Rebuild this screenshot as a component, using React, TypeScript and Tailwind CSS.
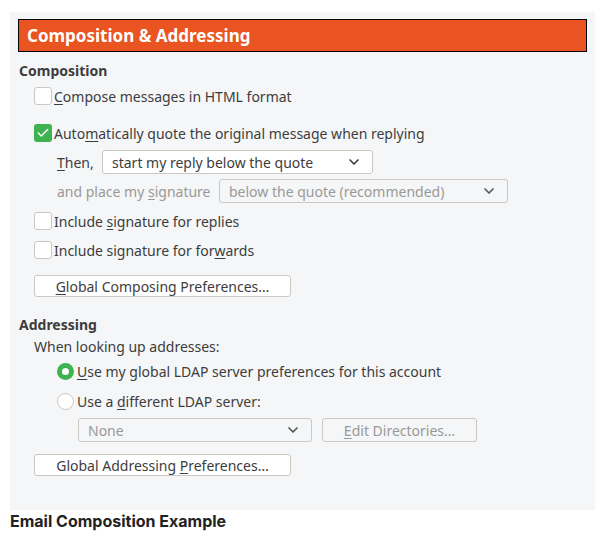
import React from 'react';
import { ChevronDown, Check } from 'lucide-react';

const font = { fontFamily: '"Noto Sans", "Open Sans", sans-serif' };

const U = ({ children }: { children: React.ReactNode }) => <span className="underline underline-offset-2">{children}</span>;

const CheckBox = ({ checked }: { checked?: boolean }) =>
  checked ? (
    <span className="flex h-[18px] w-[18px] shrink-0 items-center justify-center rounded-[3px] bg-[#3eb34f]">
      <Check className="h-3.5 w-3.5 text-white" strokeWidth={2.5} />
    </span>
  ) : (
    <span className="h-[18px] w-[18px] shrink-0 rounded-[3px] border border-[#cdc7c2] bg-white" />
  );

const Radio = ({ checked }: { checked?: boolean }) =>
  checked ? (
    <span className="flex h-[17px] w-[17px] shrink-0 items-center justify-center rounded-full bg-[#3eb34f]">
      <span className="h-[7px] w-[7px] rounded-full bg-white" />
    </span>
  ) : (
    <span className="h-[17px] w-[17px] shrink-0 rounded-full border border-[#cdc7c2] bg-white" />
  );

const Select = ({ value, className = '', disabled }: { value: string; className?: string; disabled?: boolean }) => (
  <div
    className={`flex h-[24px] items-center justify-between rounded-[3px] border border-[#cdc7c2] pl-[9px] pr-[10px] ${
      disabled ? 'bg-[#f5f6f7] text-[#9a9996]' : 'bg-white text-[#3d3d3d]'
    } ${className}`}
  >
    <span>{value}</span>
    <ChevronDown className={`h-4 w-4 ${disabled ? 'text-[#555]' : 'text-[#3d3d3d]'}`} strokeWidth={2.5} />
  </div>
);

export default function App() {
  return (
    <div className="min-h-screen bg-white p-[10px] pt-[12px]">
      <div className="w-[585px] bg-[#f5f6f7] px-[8px] pb-[34px] pt-[7px] text-[14px] text-[#3d3d3d]" style={font}>
        <div className="flex h-[33px] items-center border border-black bg-[#e95420] px-[8px] text-[17px] font-bold text-white">
          Composition &amp; Addressing
        </div>

        <div className="mt-[9px] pl-[1px] text-[14px] font-bold leading-[20px]">Composition</div>

        <div className="pl-[16px]">
          <label className="mt-[5px] flex h-[20px] items-center gap-[2px]">
            <CheckBox />
            <span><U>C</U>ompose messages in HTML format</span>
          </label>

          <label className="mt-[17px] flex h-[20px] items-center gap-[2px]">
            <CheckBox checked />
            <span>Auto<U>m</U>atically quote the original message when replying</span>
          </label>

          <div className="mt-[7px] flex items-center pl-[23px]">
            <span className="w-[45px]"><U>T</U>hen,</span>
            <Select value="start my reply below the quote" className="w-[271px]" />
          </div>

          <div className="mt-[5px] flex items-center pl-[23px] text-[#9a9996]">
            <span className="w-[162px]">and place my <U>s</U>ignature</span>
            <Select value="below the quote (recommended)" className="w-[289px]" disabled />
          </div>

          <label className="mt-[8px] flex h-[20px] items-center gap-[2px]">
            <CheckBox />
            <span>Include <U>s</U>ignature for replies</span>
          </label>

          <label className="mt-[9px] flex h-[20px] items-center gap-[2px]">
            <CheckBox />
            <span>Include signature for for<U>w</U>ards</span>
          </label>

          <button className="mt-[15px] flex h-[22px] w-[257px] items-center justify-center rounded-[3px] border border-[#cdc7c2] bg-white">
            <span><U>G</U>lobal Composing Preferences…</span>
          </button>
        </div>

        <div className="mt-[18px] pl-[1px] font-bold leading-[20px]">Addressing</div>

        <div className="pl-[16px]">
          <div className="mt-[2px] leading-[20px]">When looking up addresses:</div>

          <div className="pl-[23px]">
            <label className="mt-[4px] flex h-[20px] items-center gap-[3px]">
              <Radio checked />
              <span><U>U</U>se my global LDAP server preferences for this account</span>
            </label>
            <label className="mt-[10px] flex h-[20px] items-center gap-[3px]">
              <Radio />
              <span>Use a <U>d</U>ifferent LDAP server:</span>
            </label>
            <div className="mt-[7px] flex items-center gap-[10px] pl-[21px] text-[#9a9996]">
              <Select value="None" className="w-[234px]" disabled />
              <div className="flex h-[24px] w-[155px] items-center justify-center rounded-[3px] border border-[#cdc7c2]">
                <span><U>E</U>dit Directories…</span>
              </div>
            </div>
          </div>

          <button className="mt-[12px] flex h-[22px] w-[257px] items-center justify-center rounded-[3px] border border-[#cdc7c2] bg-white">
            <span>Global Addressing <U>P</U>references…</span>
          </button>
        </div>
      </div>
      <div className="text-[16px] font-bold leading-[22px] text-[#222]" style={{ fontFamily: 'Inter, sans-serif' }}>
        Email Composition Example
      </div>
    </div>
  );
}
